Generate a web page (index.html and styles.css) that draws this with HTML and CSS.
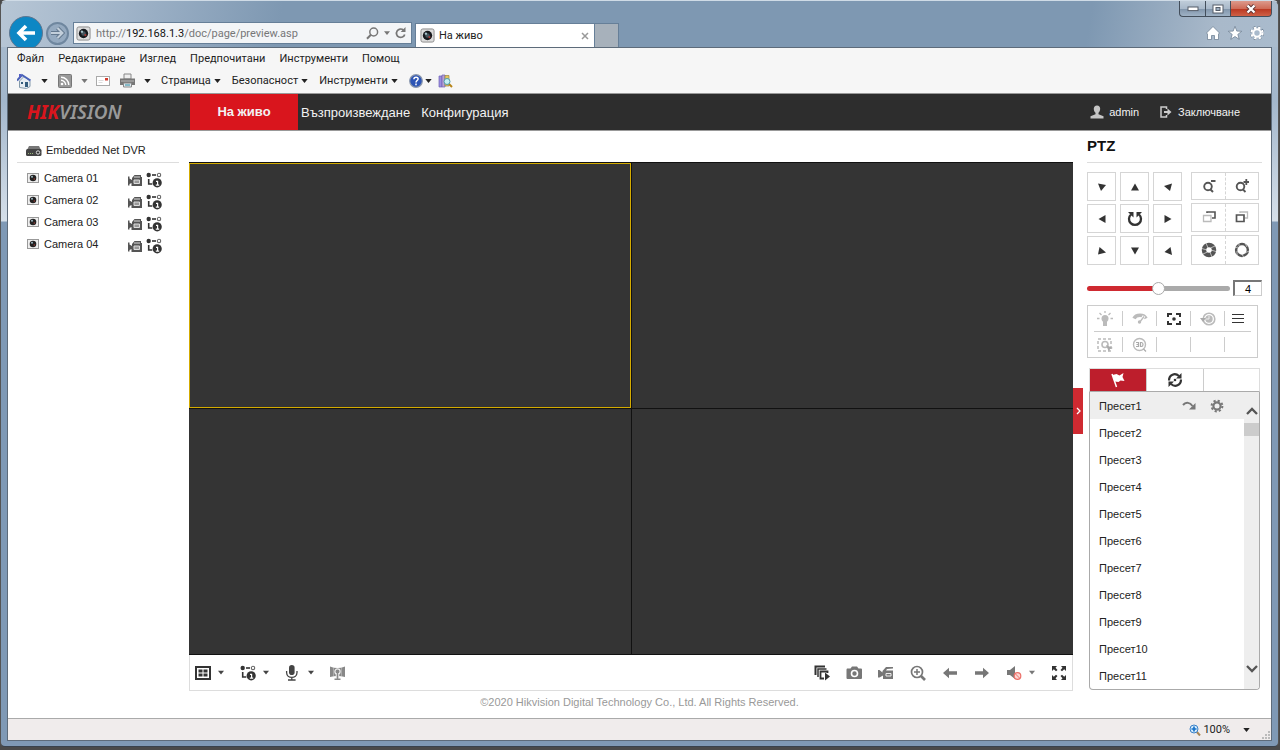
FILE: index.html
```html
<!DOCTYPE html>
<html lang="bg">
<head>
  <meta charset="UTF-8">
  <title>На живо</title>
  <link rel="stylesheet" href="styles.css">
</head>
<body>
  <svg class="sprite" aria-hidden="true">
    <symbol id="lens" viewBox="0 0 16 16">
      <rect x="1" y="1" width="14" height="14" rx="2" fill="#dcdcdc" stroke="#8a8a8a"/>
      <circle cx="8" cy="8" r="5" fill="#16191d"/>
      <circle cx="8" cy="8" r="2.4" fill="#46565e"/>
      <circle cx="6.3" cy="6" r="1.3" fill="#a9c4cc"/>
      <circle cx="10" cy="9.6" r="1.2" fill="#a83a34"/>
    </symbol>
    <symbol id="camera" viewBox="0 0 12 12">
      <rect x=".5" y="1.500" width="11" height="9" fill="#eee" stroke="#999"/>
      <circle cx="6" cy="6" r="3.300" fill="#222"/>
      <circle cx="5" cy="4.800" r="1" fill="#9fb8c4"/>
      <circle cx="7.300" cy="7" r=".8" fill="#9c3a34"/>
    </symbol>
    <symbol id="caret" viewBox="0 0 8 5"><path d="M0 0h8L4 5z" fill="currentColor"/></symbol>
    <symbol id="rec" viewBox="0 0 16 16">
      <path d="M1 4.500h1.500v2L5 8V6l2.500-3H14v2h1v9H4.500v-3L2.500 12v1.500H1z" fill="#555"/>
      <path d="M7 5h6M7 8h5.500v3.500H7z" fill="#999" stroke="#ddd"/>
    </symbol>
    <symbol id="stream" viewBox="0 0 16 16">
      <circle cx="2.700" cy="3" r="2.200" fill="#333"/>
      <path d="M6 3h4" stroke="#333" stroke-width="1.600"/>
      <circle cx="13" cy="3" r="1.700" fill="none" stroke="#666" stroke-width="1.100"/>
      <path d="M2.700 7v5h3.600" fill="none" stroke="#333" stroke-width="1.600"/>
      <circle cx="11.200" cy="10.800" r="4.600" fill="#333"/>
      <path d="M10 9.300h1.600v3.800M9.800 13.200h3.400" fill="none" stroke="#fff" stroke-width="1.200"/>
    </symbol>
    <symbol id="arrow" viewBox="0 0 16 16"><path d="M1 8l6-5.200v3.400h8v3.600H7v3.400z" fill="#777"/></symbol>
  </svg>

  <div class="window">
    <header class="titlebar">
      <div class="window-buttons">
        <button class="win-min" aria-label="Минимизиране"><svg width="12" height="6" viewBox="0 0 12 6"><rect x="1" y="1" width="10" height="3.600" fill="#fff" stroke="#555d68"/></svg></button>
        <button class="win-max" aria-label="Максимизиране"><svg width="12" height="10" viewBox="0 0 12 10"><rect x="1" y="1" width="10" height="8" fill="#fff" stroke="#555d68"/><rect x="4" y="3.500" width="4" height="3" fill="#9fb0c2" stroke="#555d68"/></svg></button>
        <button class="win-close" aria-label="Затваряне"><svg width="12" height="10" viewBox="0 0 12 10"><path d="M2.500 1.500l7 7M9.500 1.500l-7 7" stroke="#5b3434" stroke-width="4"/><path d="M2.500 1.500l7 7M9.500 1.500l-7 7" stroke="#fff" stroke-width="2.300"/></svg></button>
      </div>
      <div class="nav-row">
        <button class="back" aria-label="Назад"><svg width="20" height="18" viewBox="0 0 20 18"><path d="M19 9H4M10 2L3 9l7 7" fill="none" stroke="#fff" stroke-width="3.600"/></svg></button>
        <button class="forward" aria-label="Напред"><svg width="15" height="14" viewBox="0 0 15 14"><path d="M1 7h11M7.500 2l5 5-5 5" fill="none" stroke="#64798f" stroke-width="4"/><path d="M1 7h11M7.500 2l5 5-5 5" fill="none" stroke="#c3cfdb" stroke-width="2"/></svg></button>
        <div class="address">
          <svg width="15" height="15"><use href="#lens"/></svg>
          <a href="#" class="url">http://<strong>192.168.1.3</strong>/doc/page/preview.asp</a>
          <button aria-label="Търсене"><svg width="13" height="13" viewBox="0 0 13 13"><circle cx="7.700" cy="5" r="3.900" fill="none" stroke="#777" stroke-width="1.500"/><path d="M4.900 7.800L1 11.800" stroke="#777" stroke-width="2"/></svg></button>
          <button class="small-caret" aria-label="Списък"><svg width="6" height="4"><use href="#caret"/></svg></button>
          <button aria-label="Обновяване"><svg width="12" height="12" viewBox="0 0 12 12"><path d="M9.700 7.400A4.200 4.200 0 1 1 8.400 3" fill="none" stroke="#777" stroke-width="1.700"/><path d="M10.500 0v5H5.700z" fill="#777"/></svg></button>
        </div>
        <div class="tab">
          <svg width="15" height="15"><use href="#lens"/></svg>
          <span>На живо</span>
          <button aria-label="Затваряне на раздела"><svg width="8" height="8" viewBox="0 0 8 8"><path d="M1 1l6 6M7 1L1 7" stroke="#999" stroke-width="1.500"/></svg></button>
        </div>
        <button class="new-tab" aria-label="Нов раздел"></button>
        <div class="ie-tools">
          <button aria-label="Начало"><svg width="14" height="14" viewBox="0 0 14 14"><path d="M7 .5L13.500 7l-1 1v5.500h-4v-4h-3v4h-4V8l-1-1z" fill="#fff" stroke="#65788c" stroke-width=".7"/></svg></button>
          <button aria-label="Любими"><svg width="14" height="14" viewBox="0 0 14 14"><path d="M7 .4l1.800 4.700 4.900.2-3.900 3.100 1.400 4.900L7 10.500l-4.200 2.800 1.400-4.900L.3 5.300l4.900-.2z" fill="#fff" stroke="#65788c" stroke-width=".7"/></svg></button>
          <button aria-label="Инструменти"><svg width="14" height="14" viewBox="0 0 14 14"><circle cx="7" cy="7" r="5.600" fill="none" stroke="#65788c" stroke-width="3" stroke-dasharray="2.700 1.700"/><circle cx="7" cy="7" r="5.500" fill="none" stroke="#fff" stroke-width="2.300" stroke-dasharray="2.400 2"/><circle cx="7" cy="7" r="3.700" fill="none" stroke="#fff" stroke-width="2"/></svg></button>
        </div>
      </div>
    </header>

    <div class="client">
      <nav class="menus">
        <div class="menu-row">
          <button>Файл</button><button>Редактиране</button><button>Изглед</button><button>Предпочитани</button><button>Инструменти</button><button>Помощ</button>
        </div>
        <div class="command-row">
          <button class="with-icon" aria-label="Начална страница">
            <svg width="15" height="16" viewBox="0 0 15 16"><path d="M2.500 8v6.500l7 1 3.500-2V8L7 3.500z" fill="#e6edf2" stroke="#8298aa"/><path d="M0 7.500L5 2l8.500 5.500" fill="none" stroke="#4a62b8" stroke-width="2"/><path d="M2 1h2v4H2z" fill="#5360c4"/><path d="M4 9h2v2H4zM8 9h3v5H8z" fill="#345d7d"/></svg>
            <svg width="7" height="4"><use href="#caret"/></svg>
          </button>
          <button class="with-icon muted" aria-label="Емисии">
            <svg width="14" height="14" viewBox="0 0 14 14"><rect x=".5" y=".5" width="13" height="13" rx="1" fill="#999" stroke="#777"/><circle cx="4" cy="10" r="1.300" fill="#fff"/><path d="M3 6.300a4.700 4.700 0 0 1 4.700 4.700M3 3.200A7.800 7.800 0 0 1 10.800 11" fill="none" stroke="#fff" stroke-width="1.400"/></svg>
            <svg width="7" height="4"><use href="#caret"/></svg>
          </button>
          <button class="mail" aria-label="Поща">
            <svg width="14" height="10" viewBox="0 0 14 10"><rect x=".5" y=".5" width="13" height="9" fill="#fff" stroke="#aaa"/><path d="M2.500 4.500h5M2.500 6.500h4" stroke="#ddd"/><rect x="9" y="2" width="3" height="2.500" fill="#d23b2e"/></svg>
          </button>
          <button class="with-icon" aria-label="Печат">
            <svg width="15" height="15" viewBox="0 0 15 15"><path d="M4 1h7v5H4z" fill="#eee" stroke="#888"/><path d="M0 5.500h15v6.500H0z" fill="#777"/><path d="M1 8h13" stroke="#bbb"/><path d="M3.500 10h8v4h-8z" fill="#dfe9ee" stroke="#888"/><path d="M5 12h5" stroke="#2b8aa0"/></svg>
            <svg width="7" height="4"><use href="#caret"/></svg>
          </button>
          <button class="with-text">Страница<svg width="7" height="4"><use href="#caret"/></svg></button>
          <button class="with-text">Безопасност<svg width="7" height="4"><use href="#caret"/></svg></button>
          <button class="with-text">Инструменти<svg width="7" height="4"><use href="#caret"/></svg></button>
          <button class="help" aria-label="Помощ">
            <svg width="14" height="14" viewBox="0 0 14 14"><circle cx="7" cy="7" r="6.300" fill="#2c54b5" stroke="#8b97ac" stroke-width="1.200"/><path d="M4.900 5.300c0-3 4.400-2.700 4.200-.3C9 6.500 7 6.500 7 8.400M7 9.600v1.600" fill="none" stroke="#fff" stroke-width="1.500"/></svg>
            <svg width="7" height="4"><use href="#caret"/></svg>
          </button>
          <button aria-label="Проучване">
            <svg width="15" height="14" viewBox="0 0 15 14"><path d="M1 2h3v11H1z" fill="#9b8de0" stroke="#6e63b5" stroke-width=".7"/><path d="M4 1h3v12H4z" fill="#b9a2d4" stroke="#6e63b5" stroke-width=".7"/><path d="M7 1.500h4V12H7z" fill="#e3c763" stroke="#9b8540" stroke-width=".7"/><path d="M11 10l3 3" stroke="#b68418" stroke-width="2"/><circle cx="9" cy="7.500" r="3" fill="#c4f0f4" stroke="#4e9ca8"/></svg>
          </button>
        </div>
      </nav>

      <nav class="topnav">
        <a href="#" class="logo"><span>HIK</span>VISION</a>
        <a href="#" class="nav-link active">На живо</a>
        <a href="#" class="nav-link">Възпроизвеждане</a>
        <a href="#" class="nav-link">Конфигурация</a>
        <div class="account">
          <a href="#"><svg width="14" height="14" viewBox="0 0 14 14"><path d="M7 .5c4.400 0 3.600 5.800 1.500 7.200v1.600l5 1.900V13.500H.5v-2.300l5-1.900V7.700C3.400 6.300 2.600.5 7 .5z" fill="#c6c6c6"/></svg>admin</a>
          <a href="#" class="logout"><svg width="12" height="12" viewBox="0 0 12 12"><path d="M6.500 3V1H1v10h5.500V9" fill="none" stroke="#ccc" stroke-width="1.500"/><path d="M4 5h3.500V2.500L11.500 6l-4 3.500V7H4z" fill="#ccc"/></svg>Заключване</a>
        </div>
      </nav>

      <main class="page">
        <aside class="devices">
          <h2><svg width="16" height="16" viewBox="0 0 16 16"><path d="M3 4h10l2 4H1z" fill="#777"/><rect x="0" y="7" width="15.500" height="7" rx="1.500" fill="#444"/><path d="M2 11.500h6" stroke="#9ab87c" stroke-dasharray="1 1"/><circle cx="12" cy="10.500" r="1.700" fill="#333" stroke="#ddd"/></svg>Embedded Net DVR</h2>
          <ul>
            <li><svg width="12" height="12"><use href="#camera"/></svg><span>Camera 01</span><button aria-label="Запис"><svg width="16" height="16"><use href="#rec"/></svg></button><button aria-label="Поток"><svg width="16" height="16"><use href="#stream"/></svg></button></li>
            <li><svg width="12" height="12"><use href="#camera"/></svg><span>Camera 02</span><button aria-label="Запис"><svg width="16" height="16"><use href="#rec"/></svg></button><button aria-label="Поток"><svg width="16" height="16"><use href="#stream"/></svg></button></li>
            <li><svg width="12" height="12"><use href="#camera"/></svg><span>Camera 03</span><button aria-label="Запис"><svg width="16" height="16"><use href="#rec"/></svg></button><button aria-label="Поток"><svg width="16" height="16"><use href="#stream"/></svg></button></li>
            <li><svg width="12" height="12"><use href="#camera"/></svg><span>Camera 04</span><button aria-label="Запис"><svg width="16" height="16"><use href="#rec"/></svg></button><button aria-label="Поток"><svg width="16" height="16"><use href="#stream"/></svg></button></li>
          </ul>
        </aside>

        <section class="player">
          <div class="video-grid">
            <div class="video selected"></div>
            <div class="video"></div>
            <div class="video"></div>
            <div class="video"></div>
          </div>
          <div class="toolbar">
            <button aria-label="Разделяне на прозорци"><svg width="16" height="16" viewBox="0 0 16 16"><rect x="1" y="2" width="14" height="12" fill="#fff" stroke="#333" stroke-width="2"/><path d="M3.500 4.500h4v3h-4zM8.500 4.500h4v3h-4zM3.500 8.500h4v3h-4zM8.500 8.500h4v3h-4z" fill="#333"/></svg><svg width="6" height="5"><use href="#caret"/></svg></button>
            <button aria-label="Тип на потока"><svg width="16" height="16"><use href="#stream"/></svg><svg width="6" height="5"><use href="#caret"/></svg></button>
            <button aria-label="Микрофон"><svg width="16" height="16" viewBox="0 0 16 16"><rect x="4" y="0" width="5.600" height="10" rx="2.800" fill="#444"/><path d="M1.600 6v1.500c0 6.500 10.400 6.500 10.400 0V6M6.800 12v3M3 15h7.600" fill="none" stroke="#444" stroke-width="1.300"/></svg><svg width="6" height="5"><use href="#caret"/></svg></button>
            <button aria-label="Панорама"><svg width="16" height="16" viewBox="0 0 16 16"><path d="M0 1.500c5 2 10 2 15 0v10.500c-5-1.500-10-1.500-15 0z" fill="#888"/><path d="M3.500 3v8M11.500 3v8" stroke="#aaa"/><circle cx="7.500" cy="6.500" r="2.600" fill="none" stroke="#eee" stroke-width="1.200"/><path d="M7.500 8v5" stroke="#eee" stroke-width="3.500"/><path d="M7.500 6v8M4.500 14.300h6" stroke="#888" stroke-width="1.500"/></svg></button>
            <div class="toolbar-right">
              <button aria-label="Старт на всички"><svg width="16" height="16" viewBox="0 0 16 16"><path d="M1.500 10V1.500H11" fill="none" stroke="#333" stroke-width="2"/><path d="M4 12V4h8.500" fill="none" stroke="#333" stroke-width="1.500"/><path d="M13.500 8V6.500h-7v7H10" fill="none" stroke="#333" stroke-width="1.800"/><path d="M11 7.500l5 4-5 4z" fill="#333"/></svg></button>
              <button aria-label="Снимка"><svg width="16" height="16" viewBox="0 0 16 16"><path d="M1 3.500h3.500L6 1.500h5l1.500 2H15q1 0 1 1v8.500q0 1-1 1H1.500q-1 0-1-1V4.500z" fill="#777"/><circle cx="8.500" cy="8.500" r="3" fill="#777" stroke="#fff" stroke-width="1.600"/></svg></button>
              <button aria-label="Запис"><svg width="16" height="16" viewBox="0 0 16 16"><path d="M0 5h1.500l3 2.500V6L8 2h7v1.500L9 4l-1 1.500h7V14H5v-3.500l-3.500 2H0z" fill="#777"/><path d="M8 8.500h5v2.500H8z" fill="#777" stroke="#eee"/></svg></button>
              <button aria-label="Цифрово увеличение"><svg width="16" height="16" viewBox="0 0 16 16"><circle cx="7" cy="7" r="5.500" fill="none" stroke="#777" stroke-width="1.700"/><path d="M4 7h6M7 4v6" stroke="#777" stroke-width="1.500"/><path d="M11 11l4 4" stroke="#777" stroke-width="2.700"/></svg></button>
              <button aria-label="Предишна"><svg width="16" height="16"><use href="#arrow"/></svg></button>
              <button aria-label="Следваща" class="flip"><svg width="16" height="16"><use href="#arrow"/></svg></button>
              <button aria-label="Звук" class="muted"><svg width="16" height="16" viewBox="0 0 16 16"><path d="M1 5h3l5-4v13l-5-4H1z" fill="#777"/><circle cx="11.500" cy="11" r="3.300" fill="#fbd6d3" stroke="#ec6f68" stroke-width="1.200"/><path d="M9.500 9l4 4" stroke="#ec6f68"/></svg><svg width="6" height="5"><use href="#caret"/></svg></button>
              <button aria-label="Цял екран"><svg width="16" height="16" viewBox="0 0 16 16"><path d="M1 1h5L4.500 2.700 6.500 5 5 6.300 2.800 4.300 1 6zM15 1h-5l1.500 1.700-2 2.300L11 6.300l2.200-2L15 6zM1 15h5l-1.500-1.700 2-2.300L5 9.700l-2.200 2L1 10zM15 15h-5l1.500-1.700-2-2.300L11 9.700l2.200 2L15 10z" fill="#333"/></svg></button>
            </div>
          </div>
        </section>

        <aside class="ptz">
          <button class="collapse" aria-label="Скриване на панела"><svg width="5" height="8" viewBox="0 0 5 8"><path d="M1 1l3 3-3 3" fill="none" stroke="#fff" stroke-width="1.300"/></svg></button>
          <h2>PTZ</h2>
          <div class="controls">
            <div class="pad">
              <button aria-label="Горе вляво"><svg width="8" height="8" viewBox="0 0 8 8"><path d="M0 .5l8 1.500-5 6z" fill="#333"/></svg></button>
              <button aria-label="Горе"><svg width="8" height="8" viewBox="0 0 8 8"><path d="M4 .5l4 7H0z" fill="#333"/></svg></button>
              <button aria-label="Горе вдясно"><svg width="8" height="8" viewBox="0 0 8 8"><path d="M8 .5L0 3l6 5z" fill="#333"/></svg></button>
              <button aria-label="Вляво"><svg width="8" height="8" viewBox="0 0 8 8"><path d="M.5 4l7-4v8z" fill="#333"/></svg></button>
              <button aria-label="Автоматично"><svg width="16" height="16" viewBox="0 0 16 16"><path d="M4 3.500A6 6 0 1 0 12 3.500" fill="none" stroke="#333" stroke-width="2.300"/><path d="M1 1h5.500v5.500zM15 1H9.500v5.500z" fill="#333"/></svg></button>
              <button aria-label="Вдясно"><svg width="8" height="8" viewBox="0 0 8 8"><path d="M7.500 4l-7-4v8z" fill="#333"/></svg></button>
              <button aria-label="Долу вляво"><svg width="8" height="8" viewBox="0 0 8 8"><path d="M1.500 0L8 5.500l-8 2z" fill="#333"/></svg></button>
              <button aria-label="Долу"><svg width="8" height="8" viewBox="0 0 8 8"><path d="M4 7.500l4-7H0z" fill="#333"/></svg></button>
              <button aria-label="Долу вдясно"><svg width="8" height="8" viewBox="0 0 8 8"><path d="M6.500 0L.5 5 8 8z" fill="#333"/></svg></button>
            </div>
            <div class="lens">
              <div class="pair">
                <button aria-label="Намаляване"><svg width="14" height="14" viewBox="0 0 14 14"><circle cx="6" cy="7.500" r="3.800" fill="none" stroke="#555" stroke-width="1.900"/><path d="M8 10l3 3M9 2h4.500" stroke="#555" stroke-width="2"/></svg></button>
                <button aria-label="Увеличаване"><svg width="14" height="14" viewBox="0 0 14 14"><circle cx="5.500" cy="7.500" r="3.800" fill="none" stroke="#555" stroke-width="1.900"/><path d="M7.500 10l3 3M8.500 3H14M11.300 0v6" stroke="#555" stroke-width="1.800"/></svg></button>
              </div>
              <div class="pair">
                <button aria-label="Фокус близо"><svg width="14" height="14" viewBox="0 0 14 14"><path d="M5 3V2h8v6h-3" fill="none" stroke="#555" stroke-width="1.600"/><path d="M1.500 5.500h7.500v6H1.500z" fill="#fff" stroke="#bbb" stroke-width="1.300"/></svg></button>
                <button aria-label="Фокус далеч"><svg width="14" height="14" viewBox="0 0 14 14"><path d="M5 3V2h7.500v6H10" fill="none" stroke="#bbb" stroke-width="1.300"/><path d="M1.500 5h7.500v6.500H1.500z" fill="#fff" stroke="#555" stroke-width="1.700"/></svg></button>
              </div>
              <div class="pair">
                <button aria-label="Затваряне на блендата"><svg width="16" height="16" viewBox="0 0 16 16"><circle cx="8" cy="8" r="5" fill="none" stroke="#555" stroke-width="4.500"/><path d="M5 1l2 5M14 4L9.500 6M11 15l-2-5M2 12l4.500-2M.8 6.500L6 8M15 9.500L10 8" stroke="#fff" stroke-width=".6"/></svg></button>
                <button aria-label="Отваряне на блендата"><svg width="16" height="16" viewBox="0 0 16 16"><circle cx="8" cy="8" r="5.900" fill="none" stroke="#555" stroke-width="2.500"/><path d="M5 0v4M11 1l2 4M15 9l-4 2M10 16l-2-4M3 14V9M0 6l4-1" stroke="#fff" stroke-width=".6"/></svg></button>
              </div>
            </div>
          </div>

          <div class="speed">
            <input type="range" min="1" max="7" value="4" aria-label="Скорост">
            <input type="text" value="4" aria-label="Стойност на скоростта">
          </div>

          <div class="functions">
            <div class="function-row">
              <button aria-label="Светлина"><svg width="16" height="16" viewBox="0 0 16 16"><circle cx="8" cy="7.500" r="3.500" fill="#bbb"/><path d="M6 10h4v5H6z" fill="#bbb"/><path d="M0 7.500h2.500M13.500 7.500H16M2.500 2l2 2M13.500 2l-2 2M8 0v2" stroke="#bbb" stroke-width="1.300"/></svg></button>
              <button aria-label="Чистачка"><svg width="16" height="16" viewBox="0 0 16 16"><path d="M2 7.500c2-4.500 10-4.500 12 0" fill="none" stroke="#bbb" stroke-width="3.500"/><path d="M8 12L12 5" stroke="#fff" stroke-width="3"/><path d="M7.500 11.500L12 5.500" stroke="#bbb" stroke-width="1.300"/><circle cx="7.500" cy="11" r="1.700" fill="#bbb"/></svg></button>
              <button aria-label="Фокус"><svg width="16" height="16" viewBox="0 0 16 16"><path d="M2 6V3h4M10 3h4v3M14 10v3h-4M6 13H2v-3" fill="none" stroke="#333" stroke-width="2"/><circle cx="8" cy="8" r="1.800" fill="#333"/></svg></button>
              <button aria-label="Инициализация"><svg width="16" height="16" viewBox="0 0 16 16"><circle cx="9" cy="8" r="5.800" fill="none" stroke="#bbb" stroke-width="1.600"/><circle cx="9" cy="8" r="3.700" fill="#bbb"/><path d="M9 5v3h-3" fill="none" stroke="#eee"/><path d="M0 7h6L3 11z" fill="#aaa"/></svg></button>
              <button aria-label="Меню"><svg width="14" height="14" viewBox="0 0 14 14"><path d="M1 2.500h12M1 6.500h12M1 10.500h12" stroke="#333"/></svg></button>
            </div>
            <div class="function-row">
              <button aria-label="Проследяване"><svg width="16" height="16" viewBox="0 0 16 16"><rect x="1" y="2" width="13" height="12" fill="none" stroke="#bbb" stroke-width="1.500" stroke-dasharray="3 2"/><circle cx="8" cy="7.500" r="3" fill="none" stroke="#bbb" stroke-width="1.600"/><path d="M9 8l7 3-3 1-1 3z" fill="#aaa"/></svg></button>
              <button aria-label="3D позициониране"><svg width="16" height="16" viewBox="0 0 16 16"><circle cx="7.500" cy="7.500" r="6" fill="none" stroke="#bbb" stroke-width="1.400"/><path d="M4 5.500h2.500v4H4M4.500 7.500h2M8.500 5.500h1q1.500 0 1.500 2t-1.500 2h-1zM11.500 12l2.500 2.500" fill="none" stroke="#aaa" stroke-width="1.200"/></svg></button>
              <span></span><span></span><span></span>
            </div>
          </div>

          <div class="preset-tabs">
            <button class="active" aria-label="Пресети"><svg width="16" height="16" viewBox="0 0 16 16"><path d="M2 2l4.500 13" stroke="#fff" stroke-width="1.500"/><path d="M2.500 3l4-1 3 1.500L13.500 1l-1 4 2 4-4-.5-2 1.500-4-.5z" fill="#fff"/></svg></button>
            <button aria-label="Патрули"><svg width="16" height="16" viewBox="0 0 16 16"><path d="M2 8.500c0-6 6-8 10-4.500M14 7.500c0 6-6 8-10 4.500" fill="none" stroke="#333" stroke-width="2.200"/><path d="M14.500 1v5.500H9zM1.500 15V9.500H7z" fill="#333"/><circle cx="8" cy="8" r="1.300" fill="#333"/></svg></button>
            <span></span>
          </div>
          <div class="preset-box">
            <ul class="presets">
              <li class="current">Пресет1
                <button class="goto" aria-label="Извикване"><svg width="14" height="14" viewBox="0 0 14 14"><path d="M1 6c3-3.500 7-2.500 9.500 1" fill="none" stroke="#777" stroke-width="2"/><path d="M13.500 4v6.500H7z" fill="#777"/></svg></button>
                <button aria-label="Настройка"><svg width="14" height="14" viewBox="0 0 14 14"><circle cx="7" cy="7" r="5.400" fill="none" stroke="#777" stroke-width="2" stroke-dasharray="2.200 2.040"/><circle cx="7" cy="7" r="3.600" fill="none" stroke="#777" stroke-width="2.200"/></svg></button>
              </li>
              <li>Пресет2</li>
              <li>Пресет3</li>
              <li>Пресет4</li>
              <li>Пресет5</li>
              <li>Пресет6</li>
              <li>Пресет7</li>
              <li>Пресет8</li>
              <li>Пресет9</li>
              <li>Пресет10</li>
              <li>Пресет11</li>
            </ul>
            <div class="scrollbar">
              <button aria-label="Нагоре"><svg width="12" height="8" viewBox="0 0 12 8"><path d="M1 7l5-5 5 5" fill="none" stroke="#555" stroke-width="2.300"/></svg></button>
              <div class="thumb"></div>
              <button aria-label="Надолу"><svg width="12" height="8" viewBox="0 0 12 8"><path d="M1 1l5 5 5-5" fill="none" stroke="#555" stroke-width="2.300"/></svg></button>
            </div>
          </div>
        </aside>

        <footer class="copyright">©2020 Hikvision Digital Technology Co., Ltd. All Rights Reserved.</footer>
      </main>

      <div class="statusbar">
        <button class="zoom"><svg width="12" height="12" viewBox="0 0 12 12"><path d="M7 7l4 4.500" stroke="#a98655" stroke-width="2"/><circle cx="5" cy="5" r="4" fill="#d6ecfb" stroke="#3c82c8"/><path d="M2.500 5h5M5 2.500v5" stroke="#1771c9" stroke-width="1.700"/></svg>100%<svg class="zoom-caret" width="7" height="4"><use href="#caret"/></svg></button>
        <svg class="grip" width="9" height="9" viewBox="0 0 9 9"><path d="M7 1h2M4 4h2M7 4h2M1 7h2M4 7h2M7 7h2" stroke="#bbb" stroke-width="2"/></svg>
      </div>
    </div>
  </div>
</body>
</html>
```

FILE: styles.css
```css
* {
  box-sizing: border-box;
}
body {
  margin: 0;
  background-color: #4a4a4a;
  font-family: "Liberation Sans", Arial, sans-serif;
  font-size: 11px;
  color: #222;
}
button {
  display: flex;
  align-items: center;
  justify-content: center;
  padding: 0;
  border: none;
  background: none;
  font: inherit;
  color: inherit;
  cursor: pointer;
}
a {
  color: inherit;
  text-decoration: none;
}
ul {
  margin: 0;
  padding: 0;
  list-style: none;
}
svg {
  display: block;
  flex: none;
}
.sprite {
  position: absolute;
  width: 0;
  height: 0;
}

/* browser window */
.window {
  display: flex;
  flex-direction: column;
  min-height: calc(100vh - 4px);
  margin: 0 1px 4px 0;
  padding: 0 6px 5px;
  border: 1px solid #cfdbe6;
  border-bottom-color: #39424d;
  border-left-color: #555;
  border-right-color: #555;
  border-radius: 6px 6px 5px 5px;
  background: linear-gradient(#a9bbcd 0, #a3b7cc 100px, #d5dfe9 220px, #7f99b5 221px);
  font-family: Roboto, "Noto Sans", sans-serif;
}
.titlebar {
  margin: 0 -6px;
  padding: 0 6px 0 8px;
  height: 46px;
  overflow: hidden;
  border-radius: 6px 6px 0 0;
  background: linear-gradient(100deg, #b7c6d5 0, #9fb3c8 10%, #7e98b2 22%, #7e98b2 85%, #a9b9ca 95%, #a9bbcd 100%);
}
.window-buttons {
  display: flex;
  justify-content: flex-end;
  height: 16px;
}
.window-buttons button {
  height: 16px;
  border: 1px solid #434e5b;
  border-top: none;
  border-right: none;
  background: linear-gradient(#bfccd9 0, #a9b9ca 50%, #8094aa 51%, #9fb2c5 100%);
}
.window-buttons .win-min {
  width: 26px;
  border-radius: 0 0 0 4px;
}
.window-buttons .win-max {
  width: 25px;
}
.window-buttons .win-close {
  width: 42px;
  border-right: 1px solid #434e5b;
  border-radius: 0 0 4px 0;
  background: linear-gradient(#dc9a8c 0, #cf6c58 50%, #b93620 51%, #cf6147 100%);
}
.nav-row {
  display: flex;
  align-items: center;
  height: 32px;
}
.back {
  flex: none;
  width: 34px;
  height: 34px;
  border: 1px solid #5d7690;
  border-radius: 50%;
  background-color: #0d87c4;
}
.forward {
  flex: none;
  width: 23px;
  height: 23px;
  margin: 0 4px 0 3px;
  border: 2px solid #6f879f;
  border-radius: 50%;
  background-color: #95aac0;
}
.address {
  display: flex;
  align-items: center;
  gap: 5px;
  width: 339px;
  height: 22px;
  padding: 0 4px 0 2px;
  border: 1px solid #667f98;
  background-color: #f3f5f7;
}
.url {
  flex: 1;
  color: #777;
}
.url strong {
  font-weight: normal;
  color: #111;
}
.small-caret {
  color: #777;
}
.tab {
  display: flex;
  align-items: center;
  align-self: flex-end;
  gap: 4px;
  width: 180px;
  height: 26px;
  margin-left: 3px;
  padding: 0 5px 2px 4px;
  border: 1px solid #667f98;
  border-bottom: none;
  background-color: #fff;
}
.tab span {
  flex: 1;
}
.new-tab {
  align-self: flex-end;
  width: 24px;
  height: 26px;
  border: 1px solid #667f98;
  border-left: none;
  background-color: #a7b1bb;
}
.ie-tools {
  display: flex;
  gap: 8px;
  margin-left: auto;
  padding-right: 8px;
}
.client {
  display: flex;
  flex: 1;
  flex-direction: column;
  border: 1px solid #5d6b7a;
  background-color: #fff;
}

/* menus */
.menus {
  background-color: #f6f6f6;
  border-bottom: 1px solid #999;
}
.menu-row {
  display: flex;
  gap: 14px;
  height: 20px;
  padding-left: 9px;
}
.command-row {
  display: flex;
  align-items: center;
  height: 25px;
  padding-left: 9px;
}
.with-icon {
  gap: 9px;
  margin-right: 10px;
}
.muted {
  color: #777;
}
.with-icon.muted {
  margin-right: 8px;
}
.mail {
  margin-right: 10px;
}
.with-text {
  gap: 3px;
  margin-right: 11px;
}
.help {
  gap: 2px;
  margin-right: 6px;
}

/* site navigation */
.topnav {
  display: flex;
  align-items: center;
  height: 37px;
  border-bottom: 1px solid #999;
  background-color: #2d2d2d;
  font-family: "Liberation Sans", Arial, sans-serif;
  color: #f2f2f2;
}
.logo {
  width: 182px;
  padding-left: 19px;
  font-family: "Noto Sans", sans-serif;
  font-size: 19px;
  font-style: italic;
  font-weight: 600;
  line-height: 36px;
  color: #999;
}
.logo span {
  font-weight: 700;
  color: #d9151d;
}
.nav-link {
  margin-right: 11px;
  font-size: 13px;
}
.nav-link.active {
  width: 108px;
  margin-right: 3px;
  background-color: #d9151d;
  font-weight: bold;
  line-height: 36px;
  text-align: center;
}
.account {
  display: flex;
  gap: 21px;
  margin-left: auto;
  padding-right: 31px;
}
.account a {
  display: flex;
  align-items: center;
  gap: 5px;
}
.account .logout {
  gap: 6px;
}

/* page */
.page {
  display: grid;
  grid-template-columns: 181px 1fr 198px;
  grid-template-rows: 1fr auto;
  flex: 1;
  font-family: "Liberation Sans", Arial, sans-serif;
}
.devices {
  padding: 0 10px 0 9px;
}
.devices h2 {
  display: flex;
  align-items: center;
  gap: 4px;
  height: 32px;
  margin: 0;
  padding: 6px 0 0 9px;
  border-bottom: 1px solid #ddd;
  font-size: 11px;
  font-weight: normal;
}
.devices ul {
  padding-top: 4px;
}
.devices li {
  display: flex;
  align-items: center;
  height: 22px;
  padding: 0 17px 0 10px;
}
.devices li span {
  flex: 1;
  padding-left: 5px;
}
.devices li button {
  margin-left: 3px;
  padding-top: 4px;
}
.player {
  display: flex;
  flex-direction: column;
  padding-top: 31px;
}
.video-grid {
  display: grid;
  grid-template-columns: 1fr 1fr;
  grid-template-rows: 1fr 1fr;
  flex: 1;
  gap: 1px;
  padding: 1px 0;
  background-color: #111;
}
.video {
  background-color: #343434;
}
.video.selected {
  border: 1px solid #d3ab00;
}
.toolbar {
  display: flex;
  gap: 16px;
  height: 36px;
  padding: 0 5px;
  border: 1px solid #ddd;
  border-top: none;
  color: #444;
}
.toolbar button {
  gap: 7px;
}
.toolbar-right {
  display: flex;
  gap: 16px;
  margin-left: auto;
}
.toolbar .muted {
  color: #777;
}
.flip svg {
  transform: rotate(180deg);
}
.copyright {
  grid-column: 1 / -1;
  padding: 2px 0 6px;
  line-height: 19px;
  text-align: center;
  color: #999;
}

/* PTZ panel */
.ptz {
  position: relative;
  display: flex;
  flex-direction: column;
  padding: 0 9px 1px 14px;
}
.collapse {
  position: absolute;
  top: 257px;
  left: 0;
  width: 10px;
  height: 46px;
  background-color: #cf2a31;
}
.ptz h2 {
  height: 32px;
  margin: 0 0 9px;
  border-bottom: 1px solid #ddd;
  font-size: 15px;
  line-height: 30px;
  color: #111;
}
.controls {
  display: flex;
  gap: 9px;
}
.pad {
  display: grid;
  grid-template-columns: repeat(3, 29px);
  grid-auto-rows: 29px;
  gap: 3px 4px;
}
.pad button,
.pair {
  border: 1px solid #d5d5d5;
}
.lens {
  display: grid;
  gap: 3px;
  width: 68px;
}
.pair {
  display: grid;
  grid-template-columns: 1fr 1fr;
}
.pair button + button {
  border-left: 1px dashed #d5d5d5;
}
.speed {
  display: flex;
  align-items: center;
  gap: 3px;
  margin-top: 15px;
}
.speed input[type="range"] {
  -webkit-appearance: none;
  appearance: none;
  flex: 1;
  min-width: 0;
  height: 5px;
  margin: 0;
  border-radius: 3px;
  background: linear-gradient(to right, #cf2a31 50%, #aaa 50%);
}
.speed input[type="range"]::-webkit-slider-thumb {
  -webkit-appearance: none;
  width: 13px;
  height: 13px;
  border: 1px solid #aaa;
  border-radius: 50%;
  background-color: #fff;
}
.speed input[type="text"] {
  width: 29px;
  height: 16px;
  padding: 0;
  border: 1px solid #ccc;
  border-top: 2px solid #777;
  border-left: 2px solid #777;
  font: inherit;
  text-align: center;
}
.functions {
  width: 171px;
  margin-top: 9px;
  padding: 0 6px;
  border: 1px solid #ccc;
}
.function-row {
  display: grid;
  grid-template-columns: 28px repeat(3, 34px) 1fr;
  align-items: center;
  height: 25px;
}
.function-row + .function-row {
  height: 26px;
  border-top: 1px solid #ccc;
}
.function-row > * {
  height: 15px;
}
.function-row > :first-child {
  padding-right: 6px;
}
.function-row > * + * {
  border-left: 1px solid #ccc;
}
.preset-tabs {
  display: grid;
  grid-template-columns: repeat(3, 1fr);
  height: 24px;
  margin: 10px 2px 0;
  border: 1px solid #ddd;
  border-bottom: 1px solid #aaa;
}
.preset-tabs > * + * {
  border-left: 1px solid #ccc;
}
.preset-tabs .active {
  background-color: #bd1e2c;
}
.preset-box {
  display: flex;
  flex: 1;
  margin: 0 2px;
  border: 1px solid #aaa;
  border-top: none;
  border-radius: 0 0 4px 4px;
  overflow: hidden;
}
.presets {
  flex: 1;
}
.presets li {
  display: flex;
  align-items: center;
  height: 27px;
  padding-left: 9px;
}
.presets .current {
  gap: 14px;
  padding-right: 20px;
  background-color: #eee;
}
.presets .goto {
  margin-left: auto;
}
.scrollbar {
  display: flex;
  flex-direction: column;
  width: 15px;
  background-color: #eee;
}
.scrollbar button {
  height: 31px;
  padding-top: 7px;
}
.scrollbar button:last-child {
  height: 40px;
  margin-top: auto;
  padding: 0;
}
.thumb {
  height: 13px;
  background-color: #ccc;
}

/* status bar */
.statusbar {
  display: flex;
  justify-content: flex-end;
  height: 22px;
  border-top: 1px solid #aaa;
  background-color: #f0ecec;
}
.zoom {
  gap: 2px;
}
.zoom-caret {
  margin-left: 11px;
}
.grip {
  align-self: flex-end;
  margin: 0 1px 0 11px;
}
```
